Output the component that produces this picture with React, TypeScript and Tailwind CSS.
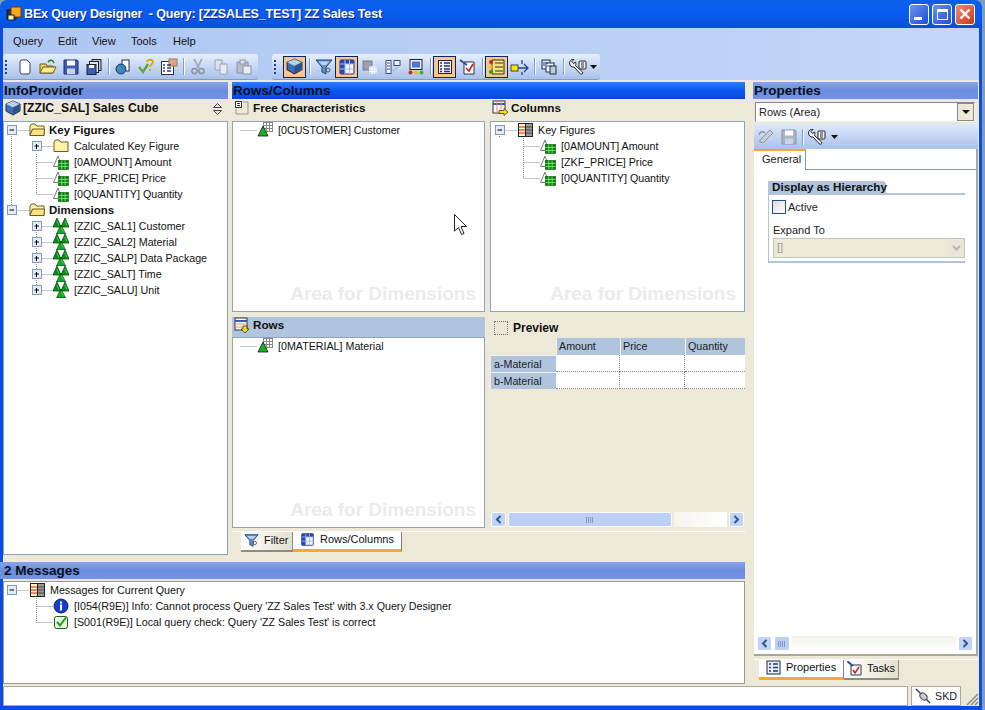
import type { ReactNode } from "react";

const F = "font-['Liberation_Sans',sans-serif]";

type IconProps = { s?: number };

const Cube = ({ s = 16 }: IconProps) => (
  <svg width={s} height={s} viewBox="0 0 16 16">
    <path d="M8 1 15 4 15 11 8 15 1 11 1 4Z" fill="#3f6fae" stroke="#1d2f55" />
    <path d="M8 1 15 4 8 7.5 1 4Z" fill="#a9c3ea" />
    <path d="M8 7.5 15 4 15 11 8 15Z" fill="#2c548f" />
    <path d="M3 3.5 9 6M6 2.5 12 5" stroke="#e2ecfa" strokeWidth=".7" />
  </svg>
);

const Folder = ({ open = false }: { open?: boolean }) => (
  <svg width="16" height="14" viewBox="0 0 16 14">
    <path d="M1 3V12.5H15V3H7.5L6 1H2.5Z" fill="#fff3a8" stroke="#6b5a22" />
    {open && <path d="M1 12.5 3.5 6H15.5L15 12.5Z" fill="#ffe27a" stroke="#6b5a22" />}
  </svg>
);

const GreenGrid = ({ x, y }: { x: number; y: number }) => (
  <g>
    <rect x={x} y={y} width="10" height="9" fill="#008a00" stroke="#004400" strokeWidth=".6" />
    <path
      d={`M${x} ${y + 3}H${x + 10}M${x} ${y + 6}H${x + 10}M${x + 3.3} ${y}V${y + 9}M${x + 6.6} ${y}V${y + 9}`}
      stroke="#8fe98f"
      strokeWidth=".8"
    />
  </g>
);

const KeyFig = () => (
  <svg width="16" height="16" viewBox="0 0 16 16">
    <path d="M0.5 12.5 5 2 9 12.5Z" fill="#fff" stroke="#777" />
    <GreenGrid x={5.5} y={6.5} />
  </svg>
);

const Dim = () => (
  <svg width="16" height="16" viewBox="0 0 16 16">
    <path d="M8 7 12.5 16H3.5Z" fill="#12a820" stroke="#064a0c" strokeWidth=".8" />
    <path d="M4 0 8 9H0Z" fill="#0b8f18" stroke="#064a0c" strokeWidth=".8" />
    <path d="M12 0 16 9H8Z" fill="#0b8f18" stroke="#064a0c" strokeWidth=".8" />
    <path d="M8 9 10.5 14M4 3 6 7.5M12 3 14 7.5" stroke="#6fe07a" strokeWidth=".7" />
  </svg>
);

const Char = () => (
  <svg width="16" height="16" viewBox="0 0 16 16">
    <rect x="6.5" y="0.5" width="9" height="9" fill="#fff" stroke="#888" />
    <path d="M6.5 3.5H15.5M6.5 6.5H15.5M9.5.5V9.5M12.5.5V9.5" stroke="#888" />
    <path d="M6 4 11 14H1Z" fill="#12b41f" stroke="#111" strokeWidth=".8" />
  </svg>
);

const Bars = () => (
  <svg width="16" height="16" viewBox="0 0 16 16">
    <rect x="1.5" y="1.5" width="14" height="13" fill="#fff6c4" stroke="#222" />
    <path d="M8.5 1.5V14.5H15.5V1.5Z" fill="#9a9a9a" stroke="#222" />
    <path d="M2 5H8M2 8H8M2 11H8" stroke="#e01818" />
    <path d="M9 5H15M9 8H15M9 11H15" stroke="#444" />
  </svg>
);

const TableArrow = ({ down = false }: { down?: boolean }) => (
  <svg width="16" height="17" viewBox="0 0 16 17">
    <rect x="1" y="1" width="12" height="12" fill="#fff" stroke="#333" />
    <path d="M1 4H13" stroke="#3459b0" strokeWidth="2" />
    {down ? (
      <path d="M1 7H13M1 10H13" stroke="#e58a6a" />
    ) : (
      <path d="M5 2V13M9 2V13" stroke="#e58a6a" />
    )}
    {down ? (
      <path d="M9 9H13V12H15L11 16 7 12H9Z" fill="#ffe000" stroke="#222" strokeWidth=".7" />
    ) : (
      <path d="M7 10.5H12V8.5L16 12 12 15.5V13.5H7Z" fill="#ffe000" stroke="#222" strokeWidth=".7" />
    )}
  </svg>
);

const Info = () => (
  <svg width="16" height="16" viewBox="0 0 16 16">
    <circle cx="8" cy="8" r="7" fill="#1340c8" stroke="#0a1f6a" />
    <rect x="7" y="6.5" width="2" height="6" fill="#fff" />
    <rect x="7" y="3.5" width="2" height="2" fill="#fff" />
  </svg>
);

const Check = () => (
  <svg width="16" height="16" viewBox="0 0 16 16">
    <rect x="1.5" y="2.5" width="13" height="12" rx="2" fill="#e8f7d8" stroke="#1f5a2a" />
    <path d="M4 8 7 11.5 13 3.5" fill="none" stroke="#15a01f" strokeWidth="2" />
  </svg>
);

const Funnel = ({ s = 18 }: IconProps) => (
  <svg width={s} height={s} viewBox="0 0 18 18">
    <path d="M1 2H17L11 9V16L7 14V9Z" fill="#5f93d8" stroke="#24406f" />
    <path d="M3.5 3.5H14.5L11 7H7Z" fill="#b8d4f6" />
    <circle cx="13" cy="12" r="2" fill="none" stroke="#555" />
  </svg>
);

const Grid4 = ({ s = 18 }: IconProps) => (
  <svg width={s} height={s} viewBox="0 0 18 18">
    <rect x="2" y="2" width="14" height="14" rx="1" fill="#f4f7fd" stroke="#1c2f7a" />
    <path d="M2 2H16V6H7V16H2Z" fill="#2a49b0" />
    <path d="M7 2V16M11.5 2V16M2 6H16M2 11H16" stroke="#a8bce8" />
  </svg>
);

const Scroll = ({ dir }: { dir: "l" | "r" }) => (
  <div className="flex h-[15px] w-[15px] items-center justify-center rounded-[2px] border border-white bg-[#c1d3f7]">
    <svg width="7" height="9" viewBox="0 0 7 9">
      <path d={dir === "l" ? "M5.5 1 2 4.5 5.5 8" : "M1.5 1 5 4.5 1.5 8"} fill="none" stroke="#34548e" strokeWidth="2" />
    </svg>
  </div>
);

const Thumb = ({ w }: { w: string }) => (
  <div className={`flex h-[15px] items-center justify-center rounded-[2px] border border-white bg-[#bcd0f6] ${w}`}>
    <svg width="8" height="6" viewBox="0 0 8 6">
      <path d="M.5 0V6M2.5 0V6M4.5 0V6M6.5 0V6" stroke="#7f99c9" />
    </svg>
  </div>
);

const Tool = ({ children, on = false }: { children: ReactNode; on?: boolean }) => (
  <div
    className={`flex h-[22px] w-[23px] items-center justify-center ${on ? "border border-[#0a246a] bg-[#f6c88f]" : ""}`}
  >
    {children}
  </div>
);

const Sep = () => (
  <div className="flex w-[6px] justify-center">
    <div className="h-[17px] w-[1px] bg-[#7f9dd0] shadow-[1px_0_0_#fff]" />
  </div>
);

const Grip = () => (
  <div className="ml-[1px] flex w-[9px] flex-col gap-[2px] pl-[1px]">
    {[0, 1, 2, 3].map((i) => (
      <div key={i} className="h-[2px] w-[2px] bg-[#23408a]" />
    ))}
  </div>
);

const Bar = ({ children, w }: { children: ReactNode; w: string }) => (
  <div
    className={`flex h-[26px] items-center rounded-[3px] border-b border-[#7f9bc9] bg-gradient-to-b from-[#e6effd] to-[#a9c1ea] ${w}`}
  >
    {children}
  </div>
);

const Floppy = ({ c = "#3c5fb5", st = "#1d2f6b" }: { c?: string; st?: string }) => (
  <svg width="18" height="18" viewBox="0 0 18 18">
    <path d="M2 2H15L16 3V16H2Z" fill={c} stroke={st} />
    <rect x="5" y="2.5" width="8" height="5" fill="#fff" />
    <rect x="5" y="10.5" width="8" height="5.5" fill="#c9d4ea" />
  </svg>
);

const Wrench = () => (
  <svg width="20" height="18" viewBox="0 0 20 18">
    <path d="M1.5 5C1.5 2.5 3.5 1 6 1.5L4 3.5 5.5 5.5 7.5 4C8.2 5.5 8 7 7.5 7.5L14.5 14C15.5 15 14 17 12.5 16L6 9C4 9.5 1.5 8 1.5 5Z" fill="#e8eefb" stroke="#222" />
    <rect x="11" y="3" width="7" height="8" rx="1" fill="#f4f4f4" stroke="#222" />
    <path d="M13 5H16M13 7H16M13 9H16" stroke="#333" />
  </svg>
);

const Caret = () => (
  <svg width="7" height="4" viewBox="0 0 7 4" className="ml-[1px]">
    <path d="M0 0H7L3.5 4Z" fill="#111" />
  </svg>
);

const Gutter = ({
  w,
  vx,
  box,
  top = false,
  bottom = false,
  h = false,
}: {
  w: number;
  vx: number;
  box?: "plus" | "minus";
  top?: boolean;
  bottom?: boolean;
  h?: boolean;
}) => (
  <svg width={w} height="16" viewBox={`0 0 ${w} 16`} className="shrink-0">
    <g stroke="#8a8a8a" strokeDasharray="1 1" fill="none">
      {top && <path d={`M${vx + 0.5} 0V8`} />}
      {bottom && <path d={`M${vx + 0.5} 8V16`} />}
      {h && <path d={`M${vx + 0.5} 8.5H${w}`} />}
    </g>
    {box && (
      <g>
        <rect x={vx - 4 + 0.5} y="3.5" width="9" height="9" fill="#e6ecf5" stroke="#7f9db9" />
        <path d={`M${vx - 2 + 0.5} 8H${vx + 3}`} stroke="#000" strokeWidth="1" />
        {box === "plus" && <path d={`M${vx + 0.5} 6V11`} stroke="#000" />}
      </g>
    )}
  </svg>
);

const Label = ({ children, bold = false }: { children: ReactNode; bold?: boolean }) => (
  <span className={`whitespace-nowrap leading-4 text-[#111] ${bold ? "text-[11.5px] font-bold" : "text-[10.7px]"}`}>
    {children}
  </span>
);

// Row with an icon cell of 16px then 4-5px to the label
const Row = ({ gut, icon, text, bold }: { gut: ReactNode; icon: ReactNode; text: string; bold?: boolean }) => (
  <div className="flex h-4 items-center">
    {gut}
    <div className="flex h-4 w-4 shrink-0 items-center justify-center">{icon}</div>
    <div className={`mb-[2px] ${bold ? "ml-[4px]" : "ml-[5px]"}`}>
      <Label bold={bold}>{text}</Label>
    </div>
  </div>
);

const Guide = () => <Gutter w={25} vx={4} top bottom />;
const Blank = ({ w }: { w: number }) => <div className="shrink-0" style={{ width: w }} />;

const Head = ({ children, bright = false }: { children: ReactNode; bright?: boolean }) => (
  <div
    className={`flex h-[17px] shrink-0 items-center pl-[1px] pt-[1px] text-[13.5px] font-bold text-[#0a1020] ${
      bright
        ? "bg-gradient-to-b from-[#2a80ff] via-[#0a58ee] to-[#0a48dc]"
        : "bg-gradient-to-b from-[#86a4ee] via-[#6c8ce0] to-[#7292e2]"
    }`}
  >
    {children}
  </div>
);

const Water = () => (
  <div className="flex justify-end pb-[5px] pr-[8px] text-[19px] font-bold leading-6 text-[#ebebeb]">
    Area for Dimensions
  </div>
);

const Box = ({ children, water = false, h = "h-[191px]" }: { children: ReactNode; water?: boolean; h?: string }) => (
  <div className={`flex flex-col justify-between border border-[#8fa3bf] bg-white ${h}`}>
    <div>{children}</div>
    {water && <Water />}
  </div>
);

const Tab = ({
  icon,
  text,
  active = false,
  w,
}: {
  icon: ReactNode;
  text: string;
  active?: boolean;
  w: string;
}) => (
  <div
    className={`flex h-[20px] items-center gap-[5px] pb-[2px] text-[11px] text-[#111] ${w} ${
      active
        ? "border-b-[3px] border-r border-b-[#f6a92c] border-r-[#808080] bg-white pl-[7px]"
        : "border-b-2 border-r border-b-[#8c8c80] border-r-[#8c8c80] bg-gradient-to-r from-white to-[#e4e1d0] pl-[3px]"
    }`}
  >
    {icon}
    {text}
  </div>
);

const Title = () => (
  <div className="flex h-[28px] shrink-0 items-center justify-between rounded-t-[7px] bg-gradient-to-b from-[#0a5fe8] via-[#0a5cf0] to-[#0650d8] pl-[6px] pr-[7px]">
    <div className="flex items-center gap-[2px]">
      <svg width="16" height="16" viewBox="0 0 16 16">
        <rect x="1" y="4" width="9" height="9" fill="#2a2a6a" stroke="#111" />
        <rect x="5" y="1" width="10" height="10" fill="#f7a81c" stroke="#6a3a05" />
        <rect x="2" y="9" width="6" height="5" fill="#fff7b0" stroke="#222" />
      </svg>
      <span className="whitespace-pre text-[12.5px] font-bold tracking-[-0.15px] text-white [text-shadow:1px_1px_0_#0a2a90]">
        BEx Query Designer  - Query: [ZZSALES_TEST] ZZ Sales Test
      </span>
    </div>
    <div className="flex gap-[3px]">
      <div className="flex h-[21px] w-[20px] items-end rounded-[3px] border border-white bg-gradient-to-br from-[#6d93ef] to-[#1d4ccf] pb-[4px] pl-[4px]">
        <div className="h-[3px] w-[8px] bg-white" />
      </div>
      <div className="flex h-[21px] w-[20px] items-center justify-center rounded-[3px] border border-white bg-gradient-to-br from-[#6d93ef] to-[#1d4ccf]">
        <div className="h-[11px] w-[11px] border border-t-[3px] border-white" />
      </div>
      <div className="flex h-[21px] w-[20px] items-center justify-center rounded-[3px] border border-white bg-gradient-to-br from-[#ee8b6d] to-[#c93312]">
        <svg width="12" height="12" viewBox="0 0 12 12">
          <path d="M1.5 1.5 10.5 10.5M10.5 1.5 1.5 10.5" stroke="#fff" strokeWidth="2.4" />
        </svg>
      </div>
    </div>
  </div>
);

const Menu = () => (
  <div className="flex h-[26px] items-center text-[11px] text-[#111]">
    <span className="ml-[10px] w-[45px]">Query</span>
    <span className="w-[34px]">Edit</span>
    <span className="w-[39px]">View</span>
    <span className="w-[42px]">Tools</span>
    <span>Help</span>
  </div>
);

const Toolbars = () => (
  <div className="flex h-[26px] gap-[14px]">
    <Bar w="w-[255px]">
      <Grip />
      <Tool>
        <svg width="18" height="18" viewBox="0 0 18 18">
          <path d="M4 4Q4 2 6 2H11L14 5V14Q14 16 12 16H6Q4 16 4 14Z" fill="#fff" stroke="#444" />
        </svg>
      </Tool>
      <Tool>
        <svg width="18" height="18" viewBox="0 0 18 18">
          <path d="M1 6H7L8 8H14V15H1Z" fill="#f6d55f" stroke="#6a5a20" />
          <path d="M1 15 4 9H17L14 15Z" fill="#fde98e" stroke="#6a5a20" />
          <path d="M9 4C11 1 14 2 15 5" fill="none" stroke="#2a7a2a" strokeWidth="1.4" />
        </svg>
      </Tool>
      <Tool>
        <Floppy />
      </Tool>
      <Tool>
        <svg width="18" height="18" viewBox="0 0 18 18">
          <rect x="7" y="1.5" width="9" height="11" fill="#b9c8e6" stroke="#222" />
          <rect x="4.5" y="3.5" width="9" height="11" fill="#dbe4f5" stroke="#222" />
          <rect x="2" y="6.5" width="9" height="10" fill="#3c5fb5" stroke="#222" />
          <rect x="4" y="7" width="5" height="3" fill="#fff" />
        </svg>
      </Tool>
      <Sep />
      <Tool>
        <svg width="18" height="18" viewBox="0 0 18 18">
          <rect x="8" y="2" width="7" height="11" fill="#fff" stroke="#333" />
          <circle cx="7" cy="11" r="5" fill="#3f7fc8" stroke="#1a3a70" />
          <path d="M4 9C6 8 8 10 6 13" fill="#4fa84a" />
        </svg>
      </Tool>
      <Tool>
        <svg width="18" height="18" viewBox="0 0 18 18">
          <path d="M2 9 6 14 11 6" fill="none" stroke="#5aa83a" strokeWidth="2.4" />
          <path d="M10 4C10 1 16 1 16 4 16 6 13 6 13 9" fill="none" stroke="#d9a800" strokeWidth="1.8" />
          <rect x="12" y="11" width="2" height="2" fill="#d9a800" />
        </svg>
      </Tool>
      <Tool>
        <svg width="18" height="18" viewBox="0 0 18 18">
          <rect x="1.5" y="3.5" width="12" height="13" fill="#fff" stroke="#333" />
          <rect x="9" y="1" width="8" height="7" fill="#e8a08a" stroke="#884" />
          <path d="M3 7H5M7 7H11M3 10H5M7 10H11M3 13H5M7 13H11" stroke="#24408a" strokeWidth="1.4" />
        </svg>
      </Tool>
      <Sep />
      <Tool>
        <svg width="18" height="18" viewBox="0 0 18 18">
          <path d="M5 1 10 10M13 1 8 10" stroke="#a2a9b5" strokeWidth="1.6" />
          <circle cx="5.5" cy="13" r="2.6" fill="none" stroke="#8b93a2" strokeWidth="1.5" />
          <circle cx="12.5" cy="13" r="2.6" fill="none" stroke="#8b93a2" strokeWidth="1.5" />
        </svg>
      </Tool>
      <Tool>
        <svg width="18" height="18" viewBox="0 0 18 18">
          <path d="M3 2H10V12H3Z" fill="#dde3ee" stroke="#9aa3b4" />
          <path d="M8 6H15V16H8Z" fill="#e6ebf4" stroke="#9aa3b4" />
        </svg>
      </Tool>
      <Tool>
        <svg width="18" height="18" viewBox="0 0 18 18">
          <path d="M2 4H13V15H2Z" fill="#b7bfcd" stroke="#8b93a2" />
          <rect x="5" y="2" width="5" height="4" fill="#dfe4ec" stroke="#8b93a2" />
          <path d="M8 8H16V16H8Z" fill="#e6ebf4" stroke="#8b93a2" />
        </svg>
      </Tool>
    </Bar>
    <Bar w="w-[328px]">
      <Grip />
      <div className="w-[1px]" />
      <Tool on>
        <Cube s={17} />
      </Tool>
      <Sep />
      <Tool>
        <Funnel />
      </Tool>
      <Tool on>
        <Grid4 />
      </Tool>
      <Tool>
        <svg width="18" height="18" viewBox="0 0 18 18">
          <rect x="2" y="3" width="9" height="9" fill="#9aa0a8" stroke="#7a8088" />
          <path d="M8 8H16V16H8Z" fill="#d5d9df" />
          <path d="M8 11H16M8 13.5H16M11 8V16M13.5 8V16" stroke="#fff" />
        </svg>
      </Tool>
      <Tool>
        <svg width="18" height="18" viewBox="0 0 18 18">
          <rect x="2" y="2.5" width="5" height="13" fill="#fff" stroke="#3a4a7a" />
          <rect x="10" y="2.5" width="6" height="5" fill="#eef2fb" stroke="#3a4a7a" />
          <path d="M3 5H6M3 8H6M3 11H6" stroke="#2a49b0" />
          <path d="M9 13 14 9" stroke="#778" strokeDasharray="1 1" />
        </svg>
      </Tool>
      <Tool>
        <svg width="18" height="18" viewBox="0 0 18 18">
          <rect x="3" y="1.5" width="12" height="10" fill="#e9eefb" stroke="#223" />
          <rect x="5" y="3.5" width="8" height="6" fill="#4c74d2" />
          <circle cx="3.5" cy="14.5" r="2" fill="#c8281c" />
          <circle cx="9" cy="14.5" r="2" fill="#d8c21c" />
          <circle cx="14.5" cy="14.5" r="2" fill="#4aa82c" />
        </svg>
      </Tool>
      <Sep />
      <Tool on>
        <svg width="16" height="16" viewBox="0 0 16 16">
          <rect x="1.5" y="1.5" width="13" height="13" fill="#f2f2f2" stroke="#223" />
          <path d="M3 4H5M7 4H13M3 7H5M7 7H13M3 10H5M7 10H13M3 12.5H5M7 12.5H13" stroke="#24366f" strokeWidth="1.3" />
        </svg>
      </Tool>
      <Tool>
        <svg width="18" height="18" viewBox="0 0 18 18">
          <path d="M5 4H15V16H5Z" fill="#fff" stroke="#333" />
          <path d="M1 2 8 7" stroke="#2a49b0" strokeWidth="2" />
          <path d="M7 10 10 13 14 6" fill="none" stroke="#c82020" strokeWidth="1.6" />
        </svg>
      </Tool>
      <Sep />
      <Tool on>
        <svg width="18" height="18" viewBox="0 0 18 18">
          <path d="M4 2H16V16H4Z" fill="#f5e27a" stroke="#333" />
          <path d="M7 5H15M7 9H15M7 13H15" stroke="#333" />
          <circle cx="3" cy="4" r="2" fill="#c8281c" />
          <circle cx="3" cy="9" r="2" fill="#d8c21c" />
          <circle cx="3" cy="14" r="2" fill="#3f9a2c" />
        </svg>
      </Tool>
      <Tool>
        <svg width="20" height="18" viewBox="0 0 20 18">
          <rect x="1" y="7" width="7" height="6" fill="#ffe800" stroke="#444" />
          <path d="M8 10H18M14 6 18 10 14 14M12 2V6M12 14V17" fill="none" stroke="#2a3f96" strokeWidth="1.3" />
        </svg>
      </Tool>
      <Sep />
      <Tool>
        <svg width="18" height="18" viewBox="0 0 18 18">
          <rect x="2" y="2" width="8" height="9" fill="#dfe7f6" stroke="#233" />
          <rect x="6" y="5" width="8" height="9" fill="#f4f6fb" stroke="#233" />
          <rect x="10" y="8" width="6" height="8" fill="#bccbe8" stroke="#233" />
          <path d="M3 5H8M3 7H5M7 8H12" stroke="#2a49b0" />
        </svg>
      </Tool>
      <Sep />
      <Tool>
        <Wrench />
      </Tool>
      <Caret />
    </Bar>
  </div>
);

const InfoProvider = () => (
  <div className="flex w-[225px] flex-col">
    <Head>InfoProvider</Head>
    <div className="flex h-[22px] shrink-0 items-start justify-between pl-[2px] pr-[6px] pt-[1px]">
      <div className="flex items-center gap-[2px]">
        <Cube />
        <span className="text-[12.2px] font-bold leading-4 text-[#111]">[ZZIC_SAL] Sales Cube</span>
      </div>
      <svg width="9" height="12" viewBox="0 0 9 12" className="mt-[3px]">
        <path d="M.5 4.5 4.5.5 8.5 4.5ZM.5 7.5 4.5 11.5 8.5 7.5Z" fill="none" stroke="#444" />
      </svg>
    </div>
    <div className="flex-1 border border-[#8fa3bf] bg-white pl-[3px]">
      <Row gut={<Gutter w={22} vx={4} box="minus" bottom h />} icon={<Folder open />} text="Key Figures" bold />
      <Row
        gut={
          <>
            <Guide />
            <Gutter w={21} vx={4} box="plus" h />
          </>
        }
        icon={<Folder />}
        text="Calculated Key Figure"
      />
      <Row
        gut={
          <>
            <Guide />
            <Gutter w={21} vx={4} top bottom h />
          </>
        }
        icon={<KeyFig />}
        text="[0AMOUNT] Amount"
      />
      <Row
        gut={
          <>
            <Guide />
            <Gutter w={21} vx={4} top bottom h />
          </>
        }
        icon={<KeyFig />}
        text="[ZKF_PRICE] Price"
      />
      <Row
        gut={
          <>
            <Guide />
            <Gutter w={21} vx={4} top h />
          </>
        }
        icon={<KeyFig />}
        text="[0QUANTITY] Quantity"
      />
      <Row gut={<Gutter w={22} vx={4} box="minus" top h />} icon={<Folder open />} text="Dimensions" bold />
      {[
        "[ZZIC_SAL1] Customer",
        "[ZZIC_SAL2] Material",
        "[ZZIC_SALP] Data Package",
        "[ZZIC_SALT] Time",
        "[ZZIC_SALU] Unit",
      ].map((t, i) => (
        <Row
          key={t}
          gut={
            <>
              <Blank w={25} />
              <Gutter w={21} vx={4} box="plus" top={i > 0} bottom={i < 4} h />
            </>
          }
          icon={<Dim />}
          text={t}
        />
      ))}
    </div>
  </div>
);

const SubHead = ({ icon, text }: { icon: ReactNode; text: string }) => (
  <div className="flex h-[22px] items-start gap-[3px] pl-[2px] pt-[1px] text-[11.7px] font-bold leading-4 text-[#111]">
    <div className="flex h-4 w-4 items-center justify-center">{icon}</div>
    {text}
  </div>
);

const Preview = () => (
  <div className="flex h-[211px] flex-col">
    <div className="flex h-[21px] items-center gap-[5px] pl-[4px] pt-[1px] text-[12px] font-bold text-[#111]">
      <div className="h-[14px] w-[14px] border border-dotted border-[#777]" />
      Preview
    </div>
    <div className="grid grid-cols-[65px_64px_65px_60px] pl-[1px] text-[10.7px] leading-[16px] text-[#222]">
      <div className="h-[17px]" />
      {["Amount", "Price", "Quantity"].map((t) => (
        <div key={t} className="h-[17px] border-l border-[#f4f2e6] bg-[#b0c4de] pl-[2px]">
          {t}
        </div>
      ))}
      {["a-Material", "b-Material"].map((t) => (
        <div key={t} className="contents">
          <div className="h-[17px] border-t border-[#f4f2e6] bg-[#b0c4de] pl-[3px]">{t}</div>
          <div className="h-[17px] border-b border-r border-dotted border-[#888] bg-white" />
          <div className="h-[17px] border-b border-r border-dotted border-[#888] bg-white" />
          <div className="h-[17px] border-b border-dotted border-[#888] bg-white" />
        </div>
      ))}
    </div>
    <div className="flex-1" />
    <div className="mb-[1px] ml-[1px] flex items-center gap-[2px] pr-[1px]">
      <Scroll dir="l" />
      <Thumb w="w-[164px]" />
      <div className="h-[15px] flex-1 bg-gradient-to-r from-[#f6f4ea] to-white" />
      <Scroll dir="r" />
    </div>
  </div>
);

const RowsColumns = () => (
  <div className="flex w-[513px] flex-col">
    <Head bright>Rows/Columns</Head>
    <div className="grid grid-cols-[253px_255px] gap-x-[5px] gap-y-[5px]">
      <div>
        <SubHead
          icon={
            <svg width="16" height="16" viewBox="0 0 16 16">
              <rect x="1.5" y="1.5" width="6" height="6" fill="#fff" stroke="#333" />
              <path d="M9 2H14V14H2V9" fill="none" stroke="#999" />
              <path d="M3 3.5H6M3 5.5H6" stroke="#333" />
            </svg>
          }
          text="Free Characteristics"
        />
        <Box water>
          <Row gut={<Gutter w={24} vx={7} h />} icon={<Char />} text="[0CUSTOMER] Customer" />
        </Box>
      </div>
      <div>
        <SubHead icon={<TableArrow />} text="Columns" />
        <Box water>
          <div className="pl-[2px]">
            <Row gut={<Gutter w={24} vx={6} box="minus" bottom h />} icon={<Bars />} text="Key Figures" />
            {["[0AMOUNT] Amount", "[ZKF_PRICE] Price", "[0QUANTITY] Quantity"].map((t, i) => (
              <Row
                key={t}
                gut={
                  <>
                    <Blank w={24} />
                    <Gutter w={23} vx={6} top bottom={i < 2} h />
                  </>
                }
                icon={<KeyFig />}
                text={t}
              />
            ))}
          </div>
        </Box>
      </div>
      <div>
        <div className="flex h-[20px] items-start gap-[3px] bg-[#b0c4de] pl-[2px] text-[11.7px] font-bold leading-4 text-[#111]">
          <div className="flex h-4 w-4 items-center justify-center">
            <TableArrow down />
          </div>
          Rows
        </div>
        <Box water>
          <Row gut={<Gutter w={24} vx={7} h />} icon={<Char />} text="[0MATERIAL] Material" />
        </Box>
      </div>
      <Preview />
    </div>
    <div className="mt-[3px] flex-1 border-t border-white pl-[9px]">
      <div className="flex">
        <Tab w="w-[52px]" icon={<Funnel s={15} />} text="Filter" />
        <Tab w="w-[109px]" active icon={<Grid4 s={15} />} text="Rows/Columns" />
      </div>
    </div>
  </div>
);

const Messages = () => (
  <div className="mt-[7px] flex h-[122px] flex-col">
    <div className="-ml-[3px]">
      <Head>
        <span className="pl-[3px]">2 Messages</span>
      </Head>
    </div>
    <div className="mt-[2px] flex-1 border border-[#9a9a8c] bg-white pl-[3px]">
      <Row gut={<Gutter w={22} vx={4} box="minus" h />} icon={<Bars />} text="Messages for Current Query" />
      <Row
        gut={
          <>
            <Blank w={25} />
            <Gutter w={21} vx={4} top bottom h />
          </>
        }
        icon={<Info />}
        text="[I054(R9E)] Info: Cannot process Query 'ZZ Sales Test' with 3.x Query Designer"
      />
      <Row
        gut={
          <>
            <Blank w={25} />
            <Gutter w={21} vx={4} top h />
          </>
        }
        icon={<Check />}
        text="[S001(R9E)] Local query check: Query 'ZZ Sales Test' is correct"
      />
    </div>
  </div>
);

const Properties = () => (
  <div className="flex h-[598px] w-[225px] flex-col">
    <Head>Properties</Head>
    <div className="ml-[2px] mr-[3px] mt-[3px] flex h-[20px] items-center justify-between border border-[#888] border-b-[#f6f4ea] border-r-[#f6f4ea] bg-white pl-[3px] text-[11px] text-[#222]">
      Rows (Area)
      <div className="flex h-[18px] w-[17px] items-center justify-center border border-[#888] bg-[#ece9d8]">
        <svg width="8" height="4" viewBox="0 0 8 4">
          <path d="M0 0H8L4 4Z" fill="#111" />
        </svg>
      </div>
    </div>
    <div className="ml-[1px] mt-[2px] flex h-[25px] items-center gap-[3px] bg-gradient-to-b from-[#dfe9fb] to-[#a9c1ea] pl-[3px]">
      <svg width="18" height="18" viewBox="0 0 18 18">
        <path d="M3 14 6 15 16 5 13 2 3 12Z" fill="#c9cdd5" stroke="#8b93a2" />
        <path d="M2 7C3 3 6 3 8 5" fill="none" stroke="#8b93a2" strokeWidth="1.4" />
      </svg>
      <div className="ml-[2px]">
        <Floppy c="#aab3c3" st="#8b93a2" />
      </div>
      <div className="mx-[1px] h-[16px] w-[1px] bg-[#7f9dd0] shadow-[1px_0_0_#fff]" />
      <Wrench />
      <Caret />
    </div>
    <div className="ml-[1px] flex flex-1 flex-col border-b-2 border-r-2 border-[#aca899] bg-white">
      <div className="flex h-[21px]">
        <div className="w-[52px] border-r border-t-2 border-r-[#8c9aa5] border-t-[#f6a92c] pl-[8px] text-[11px] leading-[17px] text-[#222]">
          General
        </div>
        <div className="flex-1 border-b border-[#8c9aa5]" />
      </div>
      <div className="flex flex-1 flex-col">
        <div className="ml-[14px] mr-[11px] mt-[11px] h-[82px] border-b-2 border-l border-[#b0c4de]">
          <div className="h-[14px] border-b-2 border-[#b0c4de]">
            <div className="h-[12px] w-[117px] whitespace-nowrap rounded-tr-[4px] bg-[#b0c4de] pl-[3px] text-[11.7px] font-bold leading-[12px] text-[#111]">
              Display as Hierarchy
            </div>
          </div>
          <div className="mt-[4px] flex items-center gap-[2px] pl-[3px] text-[11px] text-[#222]">
            <div className="h-[14px] w-[14px] border border-[#1c5180] bg-gradient-to-br from-[#dcdcd6] to-white" />
            Active
          </div>
          <div className="mt-[6px] pl-[4px] text-[11px] leading-4 text-[#222]">Expand To</div>
          <div className="ml-[4px] flex h-[20px] items-center justify-between border border-[#c9c7ba] bg-[#ece9d8] pl-[3px] text-[11px] text-[#999]">
            []
            <div className="flex h-[18px] w-[16px] items-center justify-center bg-[#e8e6da]">
              <svg width="9" height="6" viewBox="0 0 9 6">
                <path d="M1 1 4.5 4.5 8 1" fill="none" stroke="#b8b6a8" strokeWidth="2" />
              </svg>
            </div>
          </div>
        </div>
        <div className="flex-1" />
        <div className="mx-[3px] mb-[3px] flex items-center gap-[2px]">
          <Scroll dir="l" />
          <Thumb w="w-[16px]" />
          <div className="h-[15px] flex-1 bg-gradient-to-b from-[#f3f2ea] to-white" />
          <Scroll dir="r" />
        </div>
      </div>
    </div>
    <div className="ml-[1px] mt-[3px] flex border-t border-white pl-[5px]">
      <Tab
        w="w-[85px]"
        active
        icon={
          <svg width="15" height="15" viewBox="0 0 15 15">
            <rect x="1" y="1" width="13" height="13" fill="#eaf0fb" stroke="#223" />
            <path d="M3 4H5M7 4H12M3 7.5H5M7 7.5H12M3 11H5M7 11H12" stroke="#24366f" strokeWidth="1.3" />
          </svg>
        }
        text="Properties"
      />
      <Tab
        w="w-[55px]"
        icon={
          <svg width="15" height="15" viewBox="0 0 15 15">
            <path d="M4 4H14V14H4Z" fill="#fff" stroke="#333" />
            <path d="M0 0 6 5" stroke="#2a49b0" strokeWidth="2" />
            <path d="M6 9 8 12 12 6" fill="none" stroke="#c82020" strokeWidth="1.5" />
          </svg>
        }
        text="Tasks"
      />
    </div>
  </div>
);

const Status = () => (
  <div className="flex h-[20px] items-stretch gap-[3px]">
    <div className="w-[905px] border border-[#aca899] bg-white" />
    <div className="flex w-[50px] items-center gap-[4px] border border-[#aca899] bg-white pl-[3px] text-[10.7px] text-[#222]">
      <svg width="16" height="16" viewBox="0 0 16 16">
        <path d="M1 1 15 15" stroke="#1a2a6a" strokeWidth="1.3" />
        <ellipse cx="8.5" cy="8.5" rx="4" ry="3" transform="rotate(45 8.5 8.5)" fill="#c8ccd4" stroke="#444" />
      </svg>
      SKD
    </div>
    <div className="flex flex-1 items-end justify-end">
      <svg width="13" height="13" viewBox="0 0 13 13">
        <path d="M12 1 1 12M12 5 5 12M12 9 9 12" stroke="#8a8878" strokeWidth="1.4" />
      </svg>
    </div>
  </div>
);

export default function App() {
  return (
    <div className={`relative h-[710px] w-[985px] overflow-hidden bg-[#7f9db9] ${F}`}>
      <div className="flex h-[710px] w-[982px] flex-col">
        <Title />
        <div className="flex flex-1 flex-col border-x-[3px] border-b-[4px] border-[#0a4de0]">
          <div className="bg-gradient-to-r from-[#aec6f2] to-[#c3d7f8]">
            <Menu />
            <Toolbars />
          </div>
          <div className="flex flex-1 flex-col bg-[#ece9d8] pt-[2px]">
            <div className="flex h-[604px] gap-[8px]">
              <div className="flex w-[742px] flex-col">
                <div className="flex h-[473px] gap-[4px]">
                  <InfoProvider />
                  <RowsColumns />
                </div>
                <Messages />
              </div>
              <Properties />
            </div>
            <Status />
          </div>
        </div>
      </div>
      {/* mouse pointer caught in the screenshot */}
      <svg width="15" height="22" viewBox="0 0 15 22" className="absolute left-[454px] top-[214px]">
        <path d="M.5.5V17L4.5 13.5 7.5 20.5 10 19.5 7 12.5H12.5Z" fill="#fff" stroke="#222" />
      </svg>
    </div>
  );
}
